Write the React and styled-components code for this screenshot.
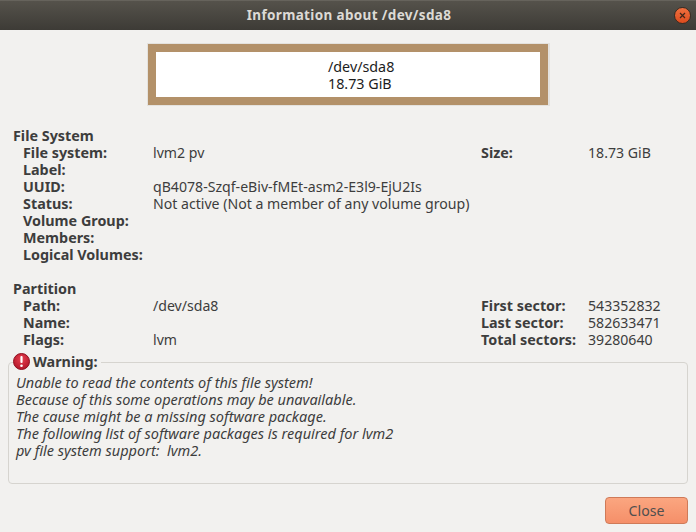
import React from "react";
import styled, { createGlobalStyle } from "styled-components";

const Global = createGlobalStyle`
  * { box-sizing: border-box; }
  html, body { margin: 0; padding: 0; background: #f2f1ef; }
  body { font-family: "Noto Sans", "Open Sans", sans-serif; font-size: 14.12px; color: #3d3d3d; }
`;

const Window = styled.div`
  width: 696px;
  height: 532px;
  display: flex;
  flex-flow: column;
  overflow: hidden;
  background: #f2f1ef;
`;

const TitleBar = styled.header`
  height: 30px;
  flex: none;
  display: flex;
  align-items: center;
  justify-content: center;
  padding: 0 0 1px 2px;
  position: relative;
  background: linear-gradient(#55524b, #3d3b36);
  border-top: 1px solid #66635c;
`;

const Title = styled.h1`
  margin: 0;
  font-size: 13.5px;
  font-weight: 700;
  letter-spacing: 0.35px;
  color: #dcdad5;
`;

const CloseDot = styled.button`
  position: absolute;
  right: 5px;
  top: 6px;
  width: 17px;
  height: 17px;
  padding: 0;
  border: 1px solid #3b2a20;
  border-radius: 50%;
  background: linear-gradient(#f0703f, #dd4c1e);
  display: flex;
  align-items: center;
  justify-content: center;
`;

const DeviceBox = styled.div`
  width: 403px;
  height: 63px;
  margin: 13px 0 0 147px;
  flex: none;
  border: solid #e4e2de;
  border-width: 1px 2px 1px 1px;
  background: #b39169;
  padding: 8px;
`;

const DeviceInner = styled.div`
  height: 100%;
  background: #fff;
  display: flex;
  flex-flow: column;
  align-items: flex-start;
  justify-content: center;
  padding: 0 0 0 172px;
  color: #1c1c1c;
  font-size: 14.3px;
  line-height: 17px;
`;

const Section = styled.section`
  padding: 0 0 0 13px;
  margin-top: ${(props) => props.$top}px;
`;

const SectionTitle = styled.div`
  font-weight: 700;
  font-size: 14.35px;
  line-height: 17px;
`;

const Grid = styled.div`
  display: grid;
  grid-template-columns: 130px 328px 107px 1fr;
  padding-left: 10px;
  grid-auto-rows: 17px;
  line-height: 17px;
`;

const Key = styled.span`
  font-weight: 700;
  font-size: 14.35px;
  white-space: nowrap;
`;

const Value = styled.span`
  white-space: nowrap;
  grid-column: ${(props) => props.$span || "auto"};
`;

const WarningFrame = styled.fieldset`
  margin: 5px 8px 0;
  height: 131px;
  flex: none;
  border: 1px solid #d6d4cf;
  border-radius: 4px;
  padding: 2px 8px 0 7px;
`;

const WarningLegend = styled.legend`
  display: flex;
  align-items: center;
  gap: 3px;
  padding: 0 3px 2px 0;
  margin-left: -3px;
  font-size: 14.35px;
  font-weight: 700;
  line-height: 17px;
`;

const WarningText = styled.p`
  margin: 0;
  font-style: italic;
  font-size: 14.5px;
  line-height: 17px;
  white-space: pre-wrap;
`;

const Footer = styled.footer`
  display: flex;
  justify-content: flex-end;
  padding: 13px 8px 0 0;
`;

const CloseButton = styled.button`
  width: 83px;
  height: 27px;
  padding: 0;
  border: 1px solid #cf7a58;
  border-radius: 4px;
  background: linear-gradient(#fba680, #f58f69);
  color: #4f4f4f;
  font: inherit;
`;

const fileSystem = [
  ["File system:", "lvm2 pv", "Size:", "18.73 GiB"],
  ["Label:", ""],
  ["UUID:", "qB4078-Szqf-eBiv-fMEt-asm2-E3l9-EjU2Is"],
  ["Status:", "Not active (Not a member of any volume group)"],
  ["Volume Group:", ""],
  ["Members:", ""],
  ["Logical Volumes:", ""],
];

const partition = [
  ["Path:", "/dev/sda8", "First sector:", "543352832"],
  ["Name:", "", "Last sector:", "582633471"],
  ["Flags:", "lvm", "Total sectors:", "39280640"],
];

function InfoRows({ rows }) {
  return (
    <Grid>
      {rows.map(([k, v, k2, v2]) => (
        <React.Fragment key={k}>
          <Key>{k}</Key>
          <Value $span={k2 ? "auto" : "2 / 5"}>{v}</Value>
          {k2 && <Key>{k2}</Key>}
          {k2 && <Value>{v2}</Value>}
        </React.Fragment>
      ))}
    </Grid>
  );
}

export default function App() {
  return (
    <Window>
      <Global />
      <TitleBar>
        <Title>Information about /dev/sda8</Title>
        <CloseDot aria-label="Close window">
          <svg width="7" height="7" viewBox="0 0 7 7">
            <path d="M1 1l5 5M6 1l-5 5" stroke="#40261a" strokeWidth="1.2" />
          </svg>
        </CloseDot>
      </TitleBar>
      <DeviceBox>
        <DeviceInner>
          <span>/dev/sda8</span>
          <span>18.73 GiB</span>
        </DeviceInner>
      </DeviceBox>
      <Section $top={21}>
        <SectionTitle>File System</SectionTitle>
        <InfoRows rows={fileSystem} />
      </Section>
      <Section $top={17}>
        <SectionTitle>Partition</SectionTitle>
        <InfoRows rows={partition} />
      </Section>
      <WarningFrame>
        <WarningLegend>
          <svg width="17" height="17" viewBox="0 0 17 17">
            <defs>
              <radialGradient id="warn" cx="50%" cy="35%" r="70%">
                <stop offset="0" stopColor="#e8404f" />
                <stop offset="1" stopColor="#ad1226" />
              </radialGradient>
            </defs>
            <circle cx="8.5" cy="8.5" r="8" fill="url(#warn)" stroke="#8f1020" />
            <rect x="7.4" y="3" width="2.2" height="7" rx="1" fill="#fff" />
            <circle cx="8.5" cy="12.8" r="1.3" fill="#fff" />
          </svg>
          Warning:
        </WarningLegend>
        <WarningText>
          {`Unable to read the contents of this file system!
Because of this some operations may be unavailable.
The cause might be a missing software package.
The following list of software packages is required for lvm2
pv file system support:  lvm2.`}
        </WarningText>
      </WarningFrame>
      <Footer>
        <CloseButton>Close</CloseButton>
      </Footer>
    </Window>
  );
}
